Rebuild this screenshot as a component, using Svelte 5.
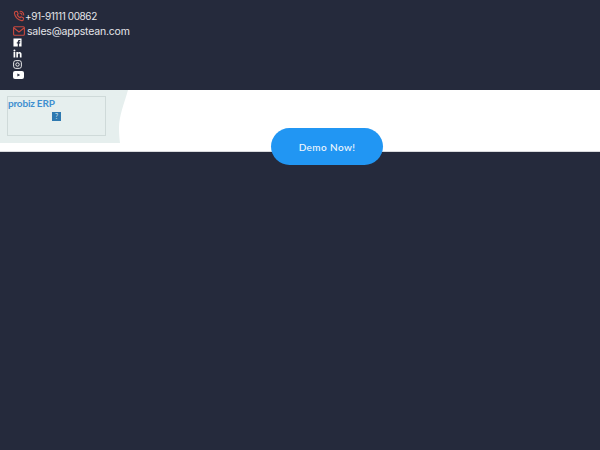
<script>
	const socials = ['facebook', 'linkedin', 'instagram', 'youtube'];
</script>

<main>
	<header>
		<div class="contact">
			<svg class="ico" viewBox="0 0 24 24" fill="none" stroke="#c8493f" stroke-width="2.200" stroke-linecap="round" stroke-linejoin="round">
				<path d="M5 3.200 8 2.600l2.400 5-2 1.900c.9 2.400 3.200 4.800 5.800 6l2-2 5 2.400-.6 3.200c-.3 1.600-1.600 2.400-3.200 2.200C9.800 20.200 3.600 13.800 2.800 6.200 2.700 4.700 3.500 3.500 5 3.200Z" />
				<path d="M14 2.500a8 8 0 0 1 7.500 7.500M14 6a4.500 4.500 0 0 1 4 4" />
			</svg>
			<span class="phone">+91-91111 00862</span>
		</div>
		<div class="contact mail">
			<svg class="ico" viewBox="0 0 24 24" fill="none" stroke="#c8493f" stroke-width="2.200" stroke-linejoin="round">
				<rect x="1.200" y="3.500" width="21.600" height="17" rx="2" />
				<path d="m2 6 10 8 10-8" />
			</svg>
			<span>sales@appstean.com</span>
		</div>
		<ul class="social">
			{#each socials as name}
				<li>
					{#if name === 'facebook'}
						<svg viewBox="0 0 10 10" class="fb"><path fill="#fff" fill-rule="evenodd" d="M.5.500h9v9H6.800V6.100h1.100l.2-1.300H6.800V4.100c0-.4.200-.6.600-.6H8.100V2.300H7C5.900 2.300 5.300 3 5.300 4.100v.7H4.200v1.300h1.100v3.400H.5Z" /></svg>
					{:else if name === 'linkedin'}
						<svg viewBox="0 0 10 10" class="fb"><path fill="#fff" d="M.6 3.400h1.900V9.500H.6ZM1.600.5a1.100 1.100 0 1 1 0 2.200 1.100 1.100 0 0 1 0-2.200ZM3.700 3.400h1.800v.8c.4-.6 1-1 1.800-1 1.600 0 2.200 1 2.200 2.600v3.700H7.600V6.200c0-.8-.2-1.300-.9-1.300-.8 0-1.200.6-1.200 1.300v3.300H3.700Z" /></svg>
					{:else if name === 'instagram'}
						<svg viewBox="0 0 10 10" class="fb" fill="none" stroke="#fff" stroke-width="1"><rect x=".7" y=".7" width="8.600" height="8.600" rx="2.400" /><circle cx="5" cy="5" r="1.900" /></svg>
					{:else}
						<svg viewBox="0 0 11 8" class="yt"><rect width="11" height="8" rx="2" fill="#fff" /><path d="m4.400 2.400 2.800 1.600-2.800 1.600Z" fill="#252a3c" /></svg>
					{/if}
				</li>
			{/each}
		</ul>
	</header>

	<section class="band">
		<div class="brand">
			<div class="logo-box">
				<span class="logo-text">probiz ERP</span>
				<span class="broken">?</span>
			</div>
		</div>
		<button>Demo Now!</button>
	</section>
</main>

<style>
	:global(body) {
		background: #252a3c;
	}

	main {
		width: 600px;
		height: 450px;
		background: #252a3c;
		overflow: hidden;
		font-family: 'Inter', 'Liberation Sans', sans-serif;
	}

	header {
		height: 90px;
		box-sizing: border-box;
		padding: 9px 0 0 13px;
		color: #e6e6ea;
		font-size: 10.500px;
	}

	.contact {
		display: flex;
		align-items: center;
		height: 14px;
	}

	.phone {
		font-size: 10px;
		letter-spacing: -0.400px;
	}

	.contact.mail {
		gap: 2px;
		margin-top: 1px;
		letter-spacing: -0.200px;
	}

	.ico {
		width: 12px;
		height: 12px;
		flex: none;
	}

	.social {
		list-style: none;
		margin: 0;
		padding: 0;
	}

	.social li {
		height: 11px;
		display: flex;
		align-items: flex-start;
	}

	.fb {
		width: 9px;
		height: 9px;
	}

	.yt {
		width: 11px;
		height: 8px;
	}

	.band {
		height: 62px;
		background: #fff;
		display: flex;
		align-items: flex-start;
		border-bottom: 1px solid #d9dadd;
		box-sizing: border-box;
	}

	.brand {
		width: 128px;
		height: 53px;
		box-sizing: border-box;
		padding: 6px 0 0 7px;
		background: #e6efee;
		clip-path: path('M0 0H128C124 14 119 26 119 38C119 44 119.500 49 120 53H0Z');
	}

	.logo-box {
		width: 99px;
		height: 40px;
		box-sizing: border-box;
		border: 1.500px solid #cfdad9;
		display: flex;
		flex-direction: column;
		align-items: center;
		font-family: 'Lato', sans-serif;
	}

	.logo-text {
		align-self: flex-start;
		color: #3f8fd0;
		font-size: 10px;
		font-weight: 700;
		letter-spacing: -0.200px;
		line-height: 13px;
	}

	.broken {
		width: 9px;
		height: 9px;
		margin-top: 2px;
		background: #2f79b0;
		color: #cfe2ee;
		font-size: 7px;
		line-height: 9px;
		text-align: center;
	}

	button {
		margin: 38px 0 0 143px;
		width: 112px;
		height: 37px;
		flex: none;
		border: none;
		border-radius: 19px;
		background: #2196f3;
		color: #f2f8fd;
		font-family: 'Lato', sans-serif;
		font-size: 10px;
		font-weight: 500;
		letter-spacing: 0.400px;
		position: relative;
	}
</style>
